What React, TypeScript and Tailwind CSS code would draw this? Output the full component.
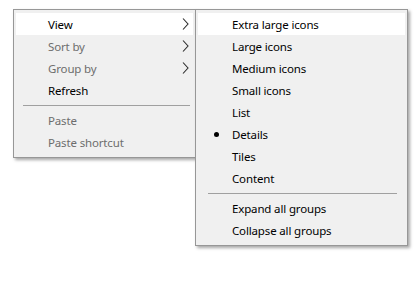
import React from "react";

type Item =
  | { kind: "item"; label: string; disabled?: boolean; sub?: boolean; hot?: boolean; checked?: boolean }
  | { kind: "sep" };

const mainMenu: Item[] = [
  { kind: "item", label: "View", sub: true, hot: true },
  { kind: "item", label: "Sort by", sub: true, disabled: true },
  { kind: "item", label: "Group by", sub: true, disabled: true },
  { kind: "item", label: "Refresh" },
  { kind: "sep" },
  { kind: "item", label: "Paste", disabled: true },
  { kind: "item", label: "Paste shortcut", disabled: true },
];

const viewMenu: Item[] = [
  { kind: "item", label: "Extra large icons", hot: true },
  { kind: "item", label: "Large icons" },
  { kind: "item", label: "Medium icons" },
  { kind: "item", label: "Small icons" },
  { kind: "item", label: "List" },
  { kind: "item", label: "Details", checked: true },
  { kind: "item", label: "Tiles" },
  { kind: "item", label: "Content" },
  { kind: "sep" },
  { kind: "item", label: "Expand all groups" },
  { kind: "item", label: "Collapse all groups" },
];

function Chevron() {
  return (
    <svg width="7" height="12" viewBox="0 0 7 12" className="shrink-0">
      <polyline points="1,0.5 6,6 1,11.5" fill="none" stroke="#2b2b2b" strokeWidth="1.1" />
    </svg>
  );
}

function Menu({ items, width, textPad, sepClass }: { items: Item[]; width: string; textPad: string; sepClass: string }) {
  return (
    <div
      className={`${width} border border-[#979797] bg-[#f0f0f0] pt-[3px] pb-[4px] px-[2px] shadow-[2px_2px_3px_rgba(0,0,0,0.35)]`}
    >
      {items.map((it, i) =>
        it.kind === "sep" ? (
          <div key={i} className="h-[8px] flex items-center">
            <div className={`${sepClass} h-px bg-[#a0a0a0]`} />
          </div>
        ) : (
          <div
            key={i}
            className={`relative h-[22px] flex items-center ${textPad} pr-[4px] ${it.hot ? "bg-white" : ""} ${
              it.disabled ? "text-[#6d6d6d]" : "text-black"
            }`}
          >
            {it.checked && (
              <span className="absolute left-[16px] top-[9px] w-[5px] h-[5px] rounded-full bg-black" />
            )}
            <span className="flex-1 leading-[16px] pt-[2px]">{it.label}</span>
            {it.sub && <Chevron />}
          </div>
        )
      )}
    </div>
  );
}

export default function App() {
  return (
    <div
      className="w-[420px] h-[284px] bg-white pt-[9px] pl-[13px] text-[11.5px] tracking-[-0.15px] flex items-start"
      style={{ fontFamily: '"Noto Sans", "Open Sans", sans-serif' }}
    >
      <Menu items={mainMenu} width="w-[183px]" textPad="pl-[32px]" sepClass="ml-[7px] mr-[3px] flex-1" />
      <div className="-ml-px">
        <Menu items={viewMenu} width="w-[213px]" textPad="pl-[34px]" sepClass="ml-[10px] mr-[8px] flex-1" />
      </div>
    </div>
  );
}
